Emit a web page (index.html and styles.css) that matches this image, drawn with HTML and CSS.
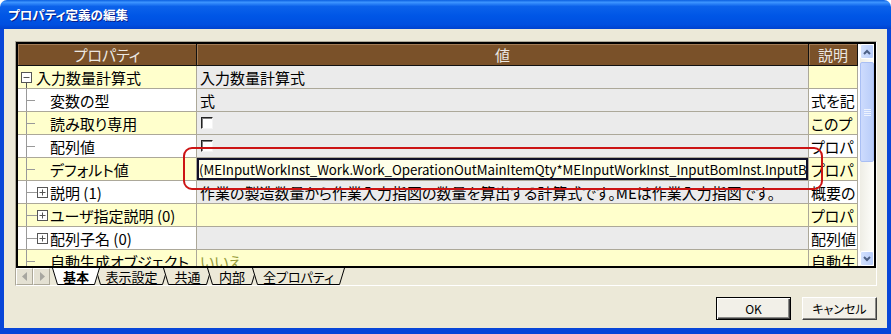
FILE: index.html
```html
<!DOCTYPE html>
<html lang="ja">
<head>
    <meta charset="UTF-8">
    <title>プロパティ定義の編集</title>
    <link rel="stylesheet" href="styles.css">
</head>
<body>
    <div class="window">
        <div class="titlebar"><span class="title">プロパティ定義の編集</span></div>
        <div class="frame">
            <div class="sheet">
                <div class="grid">
                    <div class="table">
                        <div class="row head">
                            <div class="cell c1">プロパティ</div>
                            <div class="cell c2">値</div>
                            <div class="cell c3">説明</div>
                        </div>
                        <div class="body">
                            <div class="row y">
                                <div class="cell c1">
                                    <svg class="tree" width="18" height="22"><rect x="3.5" y="6.5" width="10" height="10" fill="#fff" stroke="#555"/><path d="M5.5 11.5h6M8.5 17v5" stroke="#555" fill="none"/></svg>入力数量計算式
                                </div>
                                <div class="cell c2 grey">入力数量計算式</div>
                                <div class="cell c3"></div>
                            </div>
                            <div class="row w">
                                <div class="cell c1"><svg class="tree" width="32" height="22"><path d="M8.5 0v22M8.5 11.5h8.5" stroke="#999" fill="none"/></svg>変数の型</div>
                                <div class="cell c2 grey">式</div>
                                <div class="cell c3">式を記</div>
                            </div>
                            <div class="row y">
                                <div class="cell c1"><svg class="tree" width="32" height="22"><path d="M8.5 0v22M8.5 11.5h8.5" stroke="#999" fill="none"/></svg>読み取り専用</div>
                                <div class="cell c2 grey"><span class="chk"></span></div>
                                <div class="cell c3">このプ</div>
                            </div>
                            <div class="row w">
                                <div class="cell c1"><svg class="tree" width="32" height="22"><path d="M8.5 0v22M8.5 11.5h8.5" stroke="#999" fill="none"/></svg>配列値</div>
                                <div class="cell c2 grey"><span class="chk"></span></div>
                                <div class="cell c3">プロパ</div>
                            </div>
                            <div class="row y">
                                <div class="cell c1"><svg class="tree" width="32" height="22"><path d="M8.5 0v22M8.5 11.5h8.5" stroke="#999" fill="none"/></svg>デフォルト値</div>
                                <div class="cell c2 editing"><div class="edit">(MEInputWorkInst_Work.Work_OperationOutMainItemQty*MEInputWorkInst_InputBomInst.InputBomQty)</div></div>
                                <div class="cell c3">プロパ</div>
                            </div>
                            <div class="row w">
                                <div class="cell c1"><svg class="tree" width="32" height="22"><path d="M8.5 0v22M8.5 11.5h11" stroke="#999" fill="none"/><rect x="19.5" y="6.5" width="10" height="10" fill="#fff" stroke="#555"/><path d="M21.5 11.5h6M24.5 8.5v6" stroke="#555" fill="none"/></svg>説明 (1)</div>
                                <div class="cell c2 grey">作業の製造数量から作業入力指図の数量を算出する計算式です。MEは作業入力指図です。</div>
                                <div class="cell c3">概要の</div>
                            </div>
                            <div class="row y">
                                <div class="cell c1"><svg class="tree" width="32" height="22"><path d="M8.5 0v22M8.5 11.5h11" stroke="#999" fill="none"/><rect x="19.5" y="6.5" width="10" height="10" fill="#fff" stroke="#555"/><path d="M21.5 11.5h6M24.5 8.5v6" stroke="#555" fill="none"/></svg>ユーザ指定説明 (0)</div>
                                <div class="cell c2 yellow"></div>
                                <div class="cell c3">プロパ</div>
                            </div>
                            <div class="row w">
                                <div class="cell c1"><svg class="tree" width="32" height="22"><path d="M8.5 0v22M8.5 11.5h11" stroke="#999" fill="none"/><rect x="19.5" y="6.5" width="10" height="10" fill="#fff" stroke="#555"/><path d="M21.5 11.5h6M24.5 8.5v6" stroke="#555" fill="none"/></svg>配列子名 (0)</div>
                                <div class="cell c2 grey"></div>
                                <div class="cell c3">配列値</div>
                            </div>
                            <div class="row y">
                                <div class="cell c1"><svg class="tree" width="32" height="22"><path d="M8.5 0v22M8.5 11.5h8.5" stroke="#999" fill="none"/></svg>自動生成オブジェクト</div>
                                <div class="cell c2 yellow"><span class="muted">いいえ</span></div>
                                <div class="cell c3">自動生</div>
                            </div>
                        </div>
                    </div>
                    <div class="gap"></div>
                    <div class="vscroll">
                        <div class="sb-btn"><svg width="8" height="6"><path d="M1 5l3-3 3 3" stroke="#4d6185" stroke-width="2" fill="none"/></svg></div>
                        <div class="thumb"><svg width="7" height="8"><path d="M0 1.5h7M0 3.5h7M0 5.5h7M0 7.5h7" stroke="#eef3fe" fill="none"/></svg></div>
                        <div class="track"></div>
                        <div class="sb-btn"><svg width="8" height="6"><path d="M1 1l3 3 3-3" stroke="#4d6185" stroke-width="2" fill="none"/></svg></div>
                    </div>
                </div>
                <div class="tabstrip">
                    <div class="nav"><svg width="6" height="9"><path d="M5 0v9L0 4.5z" fill="#a7a6a0"/></svg></div>
                    <div class="nav"><svg width="6" height="9"><path d="M1 0v9L6 4.5z" fill="#a7a6a0"/></svg></div>
                    <div class="tabs">
                        <div class="tab active" style="width: 48px">
                            <svg width="48" height="17"><path d="M0 0L5 16H43L48 0z" fill="#fff"/><path d="M0.5 0L5.5 16.5H42.5L47.5 0" stroke="#000" fill="none"/></svg>
                            <span>基本</span>
                        </div>
                        <div class="tab" style="width: 73px">
                            <svg width="73" height="17"><path d="M0 0L5 16H68L73 0z" fill="#ece9d8"/><path d="M0.5 0L5.5 16.5H67.5L72.5 0" stroke="#000" fill="none"/></svg>
                            <span>表示設定</span>
                        </div>
                        <div class="tab" style="width: 49px">
                            <svg width="49" height="17"><path d="M0 0L5 16H44L49 0z" fill="#ece9d8"/><path d="M0.5 0L5.5 16.5H43.5L48.5 0" stroke="#000" fill="none"/></svg>
                            <span>共通</span>
                        </div>
                        <div class="tab" style="width: 50px">
                            <svg width="50" height="17"><path d="M0 0L5 16H45L50 0z" fill="#ece9d8"/><path d="M0.5 0L5.5 16.5H44.5L49.5 0" stroke="#000" fill="none"/></svg>
                            <span>内部</span>
                        </div>
                        <div class="tab" style="width: 93px">
                            <svg width="93" height="17"><path d="M0 0L5 16H88L93 0z" fill="#ece9d8"/><path d="M0.5 0L5.5 16.5H87.5L92.5 0" stroke="#000" fill="none"/></svg>
                            <span>全プロパティ</span>
                        </div>
                    </div>
                </div>
            </div>
            <div class="buttons">
                <button class="btn default">OK</button>
                <button class="btn">キャンセル</button>
            </div>
        </div>
        <div class="mark"></div>
    </div>
</body>
</html>
```

FILE: styles.css
```css
* {
    box-sizing: border-box;
}

body {
    margin: 0;
    background-color: #fff;
    font-family: "Noto Sans CJK JP", sans-serif;
    font-feature-settings: "palt";
}

.window {
    position: relative;
    width: 891px;
    height: 334px;
    display: flex;
    flex-direction: column;
}

.titlebar {
    height: 29px;
    flex-shrink: 0;
    display: flex;
    align-items: center;
    padding: 0 0 1px 8px;
    border-radius: 7px 7px 0 0;
    background: linear-gradient(to bottom, #0a5fe0 0%, #3d95ff 8%, #0b62ea 22%, #0056e6 55%, #004fe0 85%, #0042cf 100%);
}

.title {
    color: white;
    font-weight: bold;
    font-size: 12.5px;
    text-shadow: 1px 1px 0 #0a1f8a;
}

.frame {
    flex: 1;
    display: flex;
    flex-direction: column;
    background-color: #ece9d8;
    border-style: solid;
    border-color: #0846d8;
    border-width: 0 4px 6px 4px;
    padding: 12px 10px 0 11px;
}

.sheet {
    height: 245px;
    display: flex;
    flex-direction: column;
    border: 1px solid;
    border-color: #aca899 #fff #fff #aca899;
}

.grid {
    height: 226px;
    display: flex;
    border: 2px solid #000;
    background-color: white;
}

.table {
    width: 840px;
    display: flex;
    flex-direction: column;
}

.row {
    display: flex;
    height: 23px;
    flex-shrink: 0;
    border-bottom: 1px solid #aca899;
}

.cell {
    display: flex;
    align-items: center;
    overflow: hidden;
    white-space: nowrap;
    font-size: 15px;
    color: #000;
    border-right: 1px solid #aca899;
}

.c1 {
    width: 179px;
}

.c2 {
    width: 612px;
    padding-left: 3px;
}

.c3 {
    width: 49px;
    padding-left: 2px;
}

.head {
    height: 22px;
    background-color: #7a5129;
    border-bottom: 1px solid #111;
}

.head .cell {
    justify-content: center;
    padding: 0;
    color: #ece8e2;
    border-right-color: #111;
    box-shadow: inset 1px 1px 0 #a27c56;
}

.body {
    flex: 1;
    overflow: hidden;
}

.y .c1,
.y .c3 {
    background-color: #ffffcc;
}

.w .c1,
.w .c3 {
    background-color: #fff;
}

.grey {
    background-color: #ebebeb;
}

.yellow {
    background-color: #ffffcc;
}

.tree {
    flex-shrink: 0;
}

.chk {
    width: 12px;
    height: 12px;
    margin-left: 1px;
    background-color: white;
    border: 1px solid;
    border-color: #222 #f4f4f4 #f4f4f4 #222;
    box-shadow: inset 1px 1px 0 #808080;
}

.editing {
    padding: 0;
    background-color: #ebebeb;
}

.edit {
    width: 100%;
    height: 100%;
    display: flex;
    align-items: center;
    overflow: hidden;
    border: 2px solid #101028;
    background-color: #ffffe8;
    font-size: 13.3px;
    letter-spacing: -0.05px;
}

.muted {
    color: #989c3c;
}

.gap {
    width: 2px;
    background-color: white;
}

.vscroll {
    width: 14px;
    display: flex;
    flex-direction: column;
    background: linear-gradient(to right, #eeede5, #fefefb);
}

.sb-btn {
    height: 15px;
    display: flex;
    align-items: center;
    justify-content: center;
    border: 1px solid #fff;
    border-radius: 2px;
    background: linear-gradient(to right, #d3e1fd, #b8cdfa);
}

.thumb {
    height: 100px;
    margin-top: 3px;
    display: flex;
    align-items: center;
    justify-content: center;
    border: 1px solid #a9bff4;
    border-radius: 2px;
    background: linear-gradient(to right, #cddbfd, #b9cdf9);
}

.track {
    flex: 1;
}

.tabstrip {
    height: 17px;
    display: flex;
    background-color: #ece9d8;
}

.nav {
    width: 17px;
    height: 17px;
    display: flex;
    align-items: center;
    justify-content: center;
    border: 1px solid;
    border-color: #fff #aca899 #aca899 #fff;
    background-color: #e4e1d3;
}

.tabs {
    display: flex;
    margin-left: 2px;
}

.tab {
    display: grid;
    height: 17px;
    margin-left: -5px;
}

.tab:first-child {
    margin-left: 0;
}

.tab svg,
.tab span {
    grid-area: 1 / 1;
}

.tab span {
    justify-self: center;
    align-self: center;
    font-size: 13px;
    line-height: 15px;
    padding-bottom: 1px;
}

.tab.active {
    z-index: 2;
}

.tab.active span {
    font-weight: bold;
}

.buttons {
    display: flex;
    justify-content: flex-end;
    gap: 11px;
    margin-top: 11px;
}

.btn {
    width: 75px;
    height: 23px;
    padding: 0;
    font-family: "Noto Sans CJK JP", sans-serif;
    font-feature-settings: "palt";
    font-size: 12px;
    color: #000;
    background-color: #f2f0e8;
    border: 1px solid;
    border-color: #fff #404040 #404040 #fff;
    box-shadow: inset -1px -1px 0 #8a8a86;
}

.btn.default {
    border: 1px solid #000;
    box-shadow: inset 1px 1px 0 #fff, inset -1px -1px 0 #404040, inset -2px -2px 0 #8a8a86;
}

.mark {
    position: absolute;
    left: 183px;
    top: 147px;
    width: 640px;
    height: 43px;
    border: 2px solid #cc1414;
    border-radius: 9px;
}
```
